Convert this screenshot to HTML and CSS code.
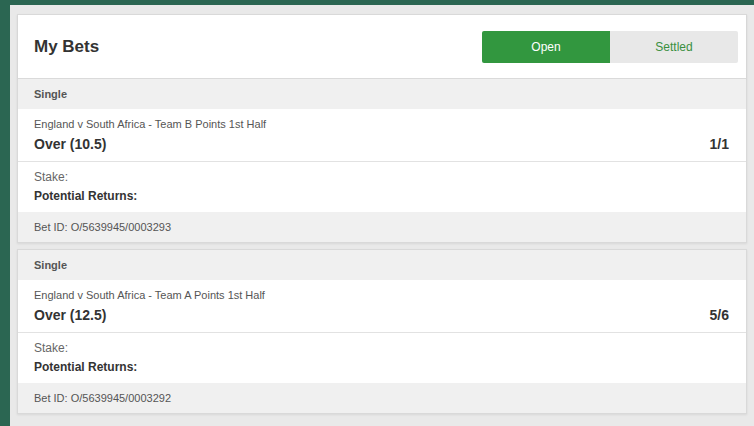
FILE: index.html
```html
<!DOCTYPE html>
<html>
<head>
<meta charset="utf-8">
<link rel="stylesheet" href="styles.css">
</head>
<body>
<div class="panel">
  <div class="card">
    <div class="header">
      <h1 class="title">My Bets</h1>
      <div class="tabs">
        <button class="tab active">Open</button>
        <button class="tab">Settled</button>
      </div>
    </div>
    <div class="bar type">Single</div>
    <div class="selection">
      <div class="event">England v South Africa - Team B Points 1st Half</div>
      <div class="pick"><span>Over (10.5)</span><span>1/1</span></div>
    </div>
    <div class="stake">
      <div class="stake-label">Stake:</div>
      <div class="returns">Potential Returns:</div>
    </div>
    <div class="bar betid">Bet ID: O/5639945/0003293</div>
  </div>
  <div class="card">
    <div class="bar type">Single</div>
    <div class="selection">
      <div class="event">England v South Africa - Team A Points 1st Half</div>
      <div class="pick"><span>Over (12.5)</span><span>5/6</span></div>
    </div>
    <div class="stake">
      <div class="stake-label">Stake:</div>
      <div class="returns">Potential Returns:</div>
    </div>
    <div class="bar betid">Bet ID: O/5639945/0003292</div>
  </div>
</div>
</body>
</html>
```
FILE: styles.css
```css
html, body {
  margin: 0;
  padding: 0;
  height: 100%;
}
body {
  background: #2b6652;
  font-family: "Liberation Sans", Arial, sans-serif;
  color: #333;
  padding: 5px 0 0 10px;
  box-sizing: border-box;
  overflow: hidden;
}
.panel {
  background: #e9e9e9;
  padding: 9px 7px 20px 7px;
  min-height: 100%;
  box-sizing: border-box;
  display: flex;
  flex-direction: column;
  gap: 6px;
}
.card {
  background: #fff;
  border: 1px solid #d9d9d9;
  box-shadow: 0 1px 2px rgba(0,0,0,0.08);
}
.header {
  height: 63px;
  display: flex;
  align-items: center;
  justify-content: space-between;
  padding: 0 8px 0 16px;
  border-bottom: 1px solid #dadada;
  box-shadow: 0 1px 1px rgba(0,0,0,0.05);
}
.title {
  margin: 0;
  font-size: 17px;
  font-weight: bold;
  color: #333;
}
.tabs {
  display: flex;
}
.tab {
  width: 128px;
  height: 32px;
  border: 0;
  margin: 0;
  padding: 0;
  font-family: "Liberation Sans", Arial, sans-serif;
  font-size: 12px;
  background: #e8e8e8;
  color: #3a8f40;
  border-radius: 0 2px 2px 0;
}
.tab.active {
  background: #32973f;
  color: #fff;
  border-radius: 2px 0 0 2px;
}
.bar {
  background: #f0f0f0;
  height: 30px;
  line-height: 30px;
  padding-left: 16px;
  font-size: 11px;
  color: #555;
}
.type {
  font-weight: bold;
}
.selection {
  padding: 7px 17px 7px 16px;
  border-bottom: 1px solid #e2e2e2;
}
.event {
  font-size: 11px;
  line-height: 16px;
  color: #555;
}
.pick {
  margin-top: 2px;
  display: flex;
  justify-content: space-between;
  font-size: 14px;
  line-height: 20px;
  font-weight: bold;
  color: #333;
}
.stake {
  padding: 6px 16px 7px;
}
.stake-label {
  font-size: 12px;
  line-height: 18px;
  color: #666;
}
.returns {
  margin-top: 1px;
  font-size: 12px;
  line-height: 18px;
  font-weight: bold;
  color: #333;
}
```
